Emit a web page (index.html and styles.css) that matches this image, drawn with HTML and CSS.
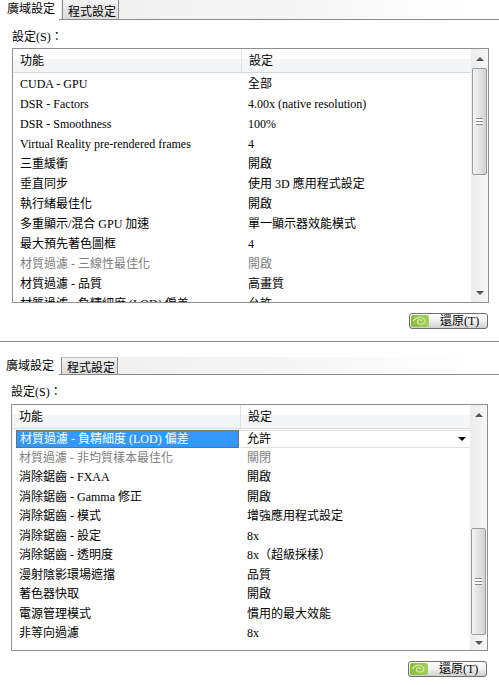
FILE: index.html
```html
<!DOCTYPE html>
<html lang="zh-Hant">
<head>
    <meta charset="UTF-8">
    <meta name="viewport" content="width=device-width, initial-scale=1.0">
    <title>廣域設定</title>
    <link rel="stylesheet" href="styles.css">
</head>
<body>
    <section class="panel panel-top">
        <div class="tabs">
            <span class="tab active">廣域設定</span>
            <span class="tab">程式設定</span>
        </div>
        <div class="content">
            <div class="label">設定(S)：</div>
            <div class="listbox">
                <div class="list">
                    <div class="row head"><span>功能</span><span>設定</span></div>
                    <div class="row"><span>CUDA - GPU</span><span>全部</span></div>
                    <div class="row"><span>DSR - Factors</span><span>4.00x (native resolution)</span></div>
                    <div class="row"><span>DSR - Smoothness</span><span>100%</span></div>
                    <div class="row"><span>Virtual Reality pre-rendered frames</span><span>4</span></div>
                    <div class="row"><span>三重緩衝</span><span>開啟</span></div>
                    <div class="row"><span>垂直同步</span><span>使用 3D 應用程式設定</span></div>
                    <div class="row"><span>執行緒最佳化</span><span>開啟</span></div>
                    <div class="row"><span>多重顯示/混合 GPU 加速</span><span>單一顯示器效能模式</span></div>
                    <div class="row"><span>最大預先著色圖框</span><span>4</span></div>
                    <div class="row disabled"><span>材質過濾 - 三線性最佳化</span><span>開啟</span></div>
                    <div class="row"><span>材質過濾 - 品質</span><span>高畫質</span></div>
                    <div class="row"><span>材質過濾 - 負精細度 (LOD) 偏差</span><span>允許</span></div>
                </div>
                <div class="scrollbar">
                    <div class="sb-btn"><i class="arrow-up"></i></div>
                    <div class="thumb"><i class="grip"></i></div>
                    <div class="sb-space"></div>
                    <div class="sb-btn"><i class="arrow-down"></i></div>
                </div>
            </div>
            <div class="actions">
                <button class="restore" type="button">
                    <span class="logo"><svg width="18" height="12" viewBox="0 0 18 12"><path d="M2 6C5 2.500 9 1.500 12 3.200S14.500 8.500 10.500 9C7.500 9.300 5.600 7.600 6.800 5.800S11 4.600 10.600 6.400" fill="none" stroke="#d5e8a6" stroke-width="1.200"/></svg></span>
                    <span class="restore-text">還原(T)</span>
                </button>
            </div>
        </div>
    </section>

    <section class="panel panel-bottom">
        <div class="tabs">
            <span class="tab active">廣域設定</span>
            <span class="tab">程式設定</span>
        </div>
        <div class="content">
            <div class="label">設定(S)：</div>
            <div class="listbox">
                <div class="list">
                    <div class="row head"><span>功能</span><span>設定</span></div>
                    <div class="row selected">
                        <span class="sel-name">材質過濾 - 負精細度 (LOD) 偏差</span>
                        <span class="sel-value">允許<i class="arrow-drop"></i></span>
                    </div>
                    <div class="row disabled"><span>材質過濾 - 非均質樣本最佳化</span><span>關閉</span></div>
                    <div class="row"><span>消除鋸齒 - FXAA</span><span>開啟</span></div>
                    <div class="row"><span>消除鋸齒 - Gamma 修正</span><span>開啟</span></div>
                    <div class="row"><span>消除鋸齒 - 模式</span><span>增強應用程式設定</span></div>
                    <div class="row"><span>消除鋸齒 - 設定</span><span>8x</span></div>
                    <div class="row"><span>消除鋸齒 - 透明度</span><span>8x（超級採樣）</span></div>
                    <div class="row"><span>漫射陰影環場遮擋</span><span>品質</span></div>
                    <div class="row"><span>著色器快取</span><span>開啟</span></div>
                    <div class="row"><span>電源管理模式</span><span>慣用的最大效能</span></div>
                    <div class="row"><span>非等向過濾</span><span>8x</span></div>
                </div>
                <div class="scrollbar">
                    <div class="sb-btn"><i class="arrow-up"></i></div>
                    <div class="sb-space thumb-offset"></div>
                    <div class="thumb"><i class="grip"></i></div>
                    <div class="sb-btn end"><i class="arrow-down"></i></div>
                </div>
            </div>
            <div class="actions">
                <button class="restore" type="button">
                    <span class="logo"><svg width="18" height="12" viewBox="0 0 18 12"><path d="M2 6C5 2.500 9 1.500 12 3.200S14.500 8.500 10.500 9C7.500 9.300 5.600 7.600 6.800 5.800S11 4.600 10.600 6.400" fill="none" stroke="#d5e8a6" stroke-width="1.200"/></svg></span>
                    <span class="restore-text">還原(T)</span>
                </button>
            </div>
        </div>
    </section>
</body>
</html>
```
FILE: styles.css
```css
body {
    margin: 0;
    background-color: white;
    color: #000;
    font-family: "Liberation Serif", "Noto Sans CJK TC", serif;
    font-size: 12px;
    line-height: 14px;
}

.panel {
    border-bottom: 1px solid #8a8a8a;
}

.panel-top {
    height: 341px;
}

.panel-bottom {
    border-bottom: none;
    padding-top: 15px;
}

/* tab strip */
.tabs {
    display: flex;
    align-items: flex-end;
    height: 19px;
    padding-left: 62px;
    position: relative;
    background: linear-gradient(to right, #fff 60px, #efefef 61px, #f6f6f6 300px, #fff 470px);
    border-bottom: 1px solid #8a8a8a;
    border-image: linear-gradient(to right, #fff 60px, #8a8a8a 60px) 1;
}

.panel-bottom .tabs {
    height: 17px;
    padding-left: 61px;
}

.tab {
    box-sizing: border-box;
    height: 100%;
    width: 57px;
    padding: 3px 0 0 5px;
    background: linear-gradient(#f2f2f2, #dcdcdc);
    border: 1px solid #8a8a8a;
    border-bottom: none;
    border-top-color: #bbb;
}

.panel-top .tab {
    border-top: none;
    padding-top: 5px;
}

.tab.active,
.panel-top .tab.active {
    position: absolute;
    left: 7px;
    top: 2px;
    width: auto;
    height: auto;
    padding: 0;
    background: none;
    border: none;
}

.panel-bottom .tab.active {
    left: 6px;
    top: 2px;
}

.content {
    padding: 10px 10px 0 12px;
}

.panel-bottom .content {
    padding: 10px 11px 0 11px;
}

.label {
    margin-bottom: 4px;
}

.panel-bottom .label {
    margin-bottom: 5px;
}

/* list */
.listbox {
    display: flex;
    height: 253px;
    border: 1px solid #8f8f8f;
    overflow: hidden;
}

.panel-bottom .listbox {
    height: 245px;
}

.list {
    width: 458px;
    overflow: hidden;
}

.row {
    display: grid;
    grid-template-columns: 228px 1fr;
    height: 20px;
    align-items: center;
    white-space: nowrap;
}

.panel-bottom .row {
    height: 19.5px;
}

.row > span {
    padding-left: 7px;
}

.row.head,
.panel-bottom .row.head {
    height: 23px;
    margin-bottom: 1px;
    background: linear-gradient(#fff 10px, #f3f5f7 10px);
    border-bottom: 1px solid #d9d9d9;
}

.row.head > span {
    height: 100%;
    line-height: 25px;
}

.row.head > span + span {
    border-left: 1px solid #e0e2e5;
}

.row.disabled {
    color: #808080;
}

.panel-bottom .row.selected {
    height: 18px;
}

.sel-name {
    align-self: stretch;
    margin: 0 1px 0 4px;
    padding-left: 3px !important;
    background-color: #3399ff;
    color: white;
    border: 1px solid #707070;
    line-height: 16px;
}

.sel-value {
    align-self: stretch;
    display: flex;
    justify-content: space-between;
    align-items: center;
    border-top: 1px solid #e0e0e0;
    border-bottom: 1px solid #e0e0e0;
    padding-right: 4px;
}

.arrow-drop {
    border: 4px solid transparent;
    border-top-color: #000;
    border-bottom: none;
}

/* scrollbar */
.scrollbar {
    width: 17px;
    display: flex;
    flex-direction: column;
    background: linear-gradient(to right, #ececec, #f6f6f6);
}

.sb-btn {
    height: 19px;
    flex-shrink: 0;
    display: flex;
    align-items: center;
    justify-content: center;
}

.arrow-up {
    border: 4px solid transparent;
    border-bottom-color: #555;
    border-top: none;
}

.arrow-down {
    border: 4px solid transparent;
    border-top-color: #555;
    border-bottom: none;
}

.thumb {
    box-sizing: border-box;
    width: 15px;
    height: 107px;
    margin-left: 1px;
    flex-shrink: 0;
    display: flex;
    align-items: center;
    justify-content: center;
    background: linear-gradient(to right, #f4f4f4, #d2d2d2);
    border: 1px solid #9b9b9b;
    border-radius: 2px;
}

.grip {
    width: 7px;
    height: 5px;
    border-top: 1px solid #888;
    border-bottom: 1px solid #888;
    background: linear-gradient(#fff 2px, #888 2px, #888 3px, #fff 3px);
}

.sb-space {
    flex: 1;
}

.thumb-offset {
    flex: none;
    height: 104px;
}

.end {
    flex: 1;
}

/* restore button */
.actions {
    display: flex;
    justify-content: flex-end;
    padding-right: 1px;
    margin-top: 10px;
}

.restore {
    box-sizing: border-box;
    display: flex;
    align-items: center;
    width: 79px;
    height: 16px;
    padding: 1px;
    font: inherit;
    color: #000;
    background: linear-gradient(#fff, #f0f0f0 50%, #cfcfcf);
    border: 1px solid #6e6e6e;
    border-radius: 3px;
}

.logo {
    display: flex;
    width: 18px;
    height: 12px;
    background: linear-gradient(to right, #86be36, #a5d060);
    border-radius: 2px;
}

.restore-text {
    margin-left: 11px;
}
```
